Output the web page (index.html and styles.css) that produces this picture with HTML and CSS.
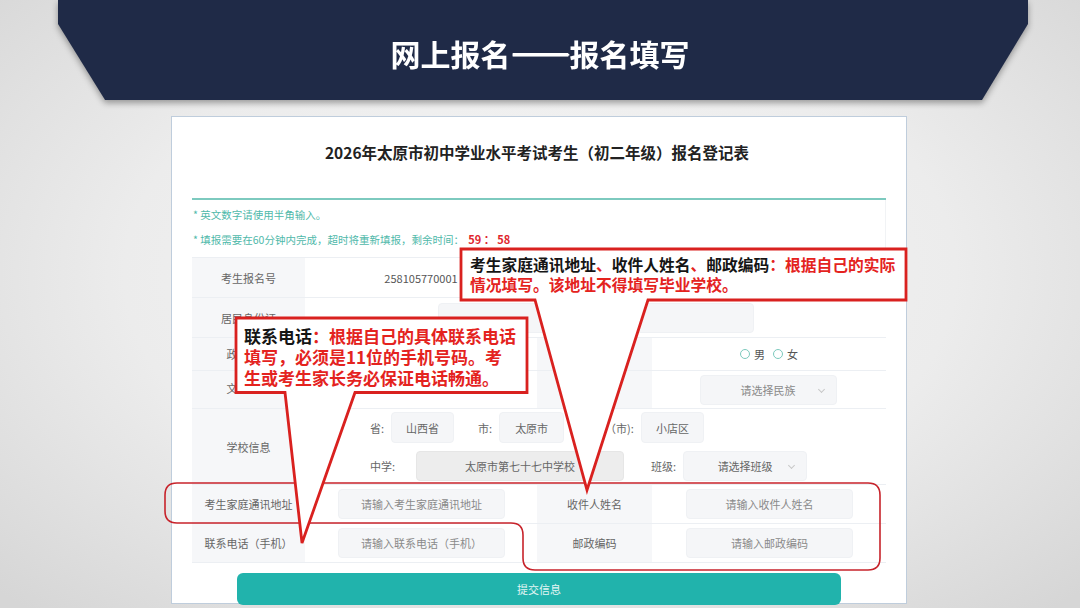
FILE: index.html
```html
<!DOCTYPE html>
<html lang="zh-CN">
<head>
<meta charset="utf-8">
<title>网上报名——报名填写</title>
<link rel="stylesheet" href="styles.css">
</head>
<body>
<div class="banner-wrap">
  <div class="banner"><h1 class="banner-title">网上报名<span class="dash">——</span>报名填写</h1></div>
</div>

<div class="sheet">
  <h2 class="sheet-title">2026年太原市初中学业水平考试考生（初二年级）报名登记表</h2>
  <div class="rule"></div>
  <div class="notes">
    <p class="note">* 英文数字请使用半角输入。</p>
    <p class="note">* 填报需要在60分钟内完成，超时将重新填报，剩余时间： <span class="timer">59 ： 58</span></p>
  </div>

  <div class="grid">
    <div class="cell lab">考生报名号</div>
    <div class="cell val">258105770001</div>
    <div class="cell lab"></div>
    <div class="cell val"></div>

    <div class="cell lab">居民身份证</div>
    <div class="cell val wide"><div class="box idbox"></div></div>

    <div class="cell lab">政治面貌</div>
    <div class="cell val"></div>
    <div class="cell lab"></div>
    <div class="cell val">
      <span class="radio"></span><span class="rtext">男</span>
      <span class="radio"></span><span class="rtext">女</span>
    </div>

    <div class="cell lab lab-up">文化程度</div>
    <div class="cell val"></div>
    <div class="cell lab"></div>
    <div class="cell val"><div class="box select nation">请选择民族<span class="chev"></span></div></div>

    <div class="cell lab">学校信息</div>
    <div class="cell wide school">
      <div class="sline">
        <span class="slab">省:</span><span class="box sbox w63">山西省</span>
        <span class="slab ml24">市:</span><span class="box sbox w65">太原市</span>
        <span class="slab ml19">区县（市):</span><span class="box sbox w63">小店区</span>
      </div>
      <div class="sline">
        <span class="slab">中学:</span><span class="box sbox dis w208">太原市第七十七中学校</span>
        <span class="slab ml28">班级:</span><span class="box sbox select w124">请选择班级<span class="chev"></span></span>
      </div>
    </div>

    <div class="cell lab">考生家庭通讯地址</div>
    <div class="cell val"><div class="box inp">请输入考生家庭通讯地址</div></div>
    <div class="cell lab">收件人姓名</div>
    <div class="cell val"><div class="box inp">请输入收件人姓名</div></div>

    <div class="cell lab">联系电话（手机）</div>
    <div class="cell val"><div class="box inp">请输入联系电话（手机）</div></div>
    <div class="cell lab">邮政编码</div>
    <div class="cell val"><div class="box inp">请输入邮政编码</div></div>
  </div>

  <div class="submit">提交信息</div>
</div>

<div class="overlay">
  <svg class="marks" width="1080" height="608" viewBox="0 0 1080 608">
    <path class="ring" d="M177,483 H868 Q880,483 880,495 V558 Q880,570 868,570 H535 Q523,570 523,558 V535 Q523,523 511,523 H177 Q165,523 165,511 V495 Q165,483 177,483 Z"/>
    <path class="bubble" d="M461,249 H906 V300 H648 L587,490 L535,300 H461 Z"/>
    <path class="bubble" d="M236,318 H527 V392.5 H355 L302,543 L285,392.5 H236 Z"/>
  </svg>
  <div class="tip tip-a"><b class="k">考生家庭通讯地址</b><span class="r">、</span><b class="k">收件人姓名</b><span class="r">、</span><b class="k">邮政编码</b><span class="r">：根据自己的实际<br>情况填写。该地址不得填写毕业学校。</span></div>
  <div class="tip tip-b"><b class="k">联系电话</b><span class="r">：根据自己的具体联系电话<br>填写，必须是11位的手机号码。考<br>生或考生家长务必保证电话畅通。</span></div>
</div>
</body>
</html>
```

FILE: styles.css
```css
* { box-sizing: border-box; }
html, body { margin: 0; padding: 0; }
body {
  width: 1080px;
  height: 608px;
  overflow: hidden;
  position: relative;
  font-family: "Noto Sans CJK SC", "Noto Sans", "Liberation Sans", sans-serif;
  background: radial-gradient(ellipse 70% 75% at 50% 45%, #f6f6f6 0%, #ececec 55%, #d6d6d6 100%);
}

/* banner */
.banner-wrap { filter: drop-shadow(0 3px 3px rgba(0,0,0,0.35)); }
.banner {
  margin: 0 52px 0 58px;
  height: 100px;
  background: #1f2a47;
  clip-path: polygon(0 0, 100% 0, 100% 24%, 95.26% 100%, 4.85% 100%, 0 24%);
  display: flex;
  align-items: center;
  justify-content: center;
  padding: 6px 6px 0 0;
}
.banner-title {
  margin: 0;
  color: #ffffff;
  font-size: 30px;
  font-weight: 700;
  line-height: 1;
}
.dash {
  letter-spacing: -1px;
  text-shadow: 0 1px 0 #ffffff, 0 -1px 0 #ffffff, 1px 0 0 #ffffff;
}

/* sheet */
.sheet {
  margin: 16px 0 0 171px;
  width: 736px;
  height: 488px;
  background: #ffffff;
  border: 1px solid #bfcddc;
  padding: 0 20px;
}
.sheet-title {
  margin: 23px 0 0;
  height: 24px;
  line-height: 24px;
  text-align: center;
  font-size: 15.5px;
  font-weight: 700;
  color: #222;
  padding-right: 4px;
}
.rule {
  margin-top: 34px;
  height: 2px;
  background: #7dcabf;
}
.notes {
  padding: 3px 0 0 1px;
  height: 57px;
  border-right: 1px solid #f1f3f5;
}
.note {
  margin: 0;
  height: 24px;
  line-height: 24px;
  font-size: 10.5px;
  color: #4fb9aa;
}
.timer {
  color: #e0262c;
  font-weight: 700;
  font-size: 11px;
  margin-left: 2px;
}

/* table grid */
.grid {
  display: grid;
  grid-template-columns: 113px 232px 115px 234px;
  grid-template-rows: 40px 40px 33px 38px 76px 39px 39px;
  border-top: 1px solid #eceff3;
}
.cell {
  border-bottom: 1px solid #eceff3;
  display: flex;
  align-items: center;
  justify-content: center;
  font-size: 11px;
  color: #666;
}
.lab { background: #f6f7f9; }
.lab-up { padding-bottom: 3px; }
.val { background: #fff; color: #555; }
.wide { grid-column: span 3; }

.box {
  background: #f5f6f8;
  border: 1px solid #eff1f4;
  border-radius: 4px;
  display: flex;
  align-items: center;
  justify-content: center;
  color: #8a8a8a;
  font-size: 11px;
}
.idbox { width: 316px; height: 30px; }
.inp { width: 167px; height: 30px; margin-left: 1px; }
.select { position: relative; }
.nation { width: 137px; height: 30px; margin-left: -2px; }
.chev {
  position: absolute;
  right: 12px;
  top: 11px;
  width: 5px;
  height: 5px;
  border-right: 1px solid #c8c8c8;
  border-bottom: 1px solid #c8c8c8;
  transform: rotate(45deg);
}

.radio {
  width: 10px;
  height: 10px;
  border: 1.5px solid #7cc9bd;
  border-radius: 50%;
  margin-right: 4px;
}
.rtext { margin-right: 8px; color: #555; }
.rtext:last-child { margin-right: 0; }

/* school */
.school {
  flex-direction: column;
  align-items: flex-start;
  justify-content: center;
  padding-left: 65px;
  gap: 8px;
}
.sline { display: flex; align-items: center; }
.slab { color: #666; font-size: 11px; margin-right: 7px; }
.sbox { height: 31px; color: #666; }
.w63 { width: 63px; }
.w65 { width: 65px; }
.w208 { width: 208px; margin-left: 14px; }
.w124 { width: 124px; }
.sline + .sline .sbox { height: 30px; }
.dis { background: #ededed; border-color: #e6e6e6; color: #666; }
.ml24 { margin-left: 24px; }
.ml19 { margin-left: 19px; }
.ml28 { margin-left: 27px; }

/* submit */
.submit {
  margin: 10px 0 0 45px;
  width: 604px;
  height: 32px;
  border-radius: 6px;
  background: #21b3ac;
  color: #e4f6f5;
  font-size: 11px;
  display: flex;
  align-items: center;
  justify-content: center;
}

/* annotation overlay */
.overlay {
  position: absolute;
  left: 0;
  top: 0;
  width: 1080px;
  height: 608px;
  pointer-events: none;
}
.marks { position: absolute; left: 0; top: 0; }
.ring { fill: none; stroke: #c7232b; stroke-width: 1.6; }
.bubble { fill: #ffffff; stroke: #d9211f; stroke-width: 2.8; stroke-linejoin: miter; }
.tip {
  position: absolute;
  font-weight: 700;
  white-space: nowrap;
}
.tip b { font-weight: 700; }
.k { color: #151515; }
.r { color: #e4231e; }
.tip-a {
  left: 470px;
  top: 255px;
  font-size: 15.75px;
  line-height: 19.5px;
}
.tip-b {
  left: 244px;
  top: 325px;
  font-size: 17px;
  line-height: 21px;
}
```
